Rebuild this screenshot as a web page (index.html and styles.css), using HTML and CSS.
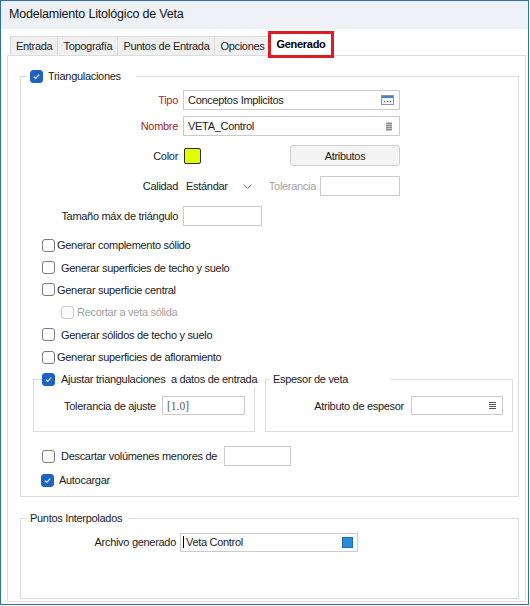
FILE: index.html
```html
<!DOCTYPE html>
<html lang="es">
<head>
  <meta charset="UTF-8">
  <title>Modelamiento Litológico de Veta</title>
  <link rel="stylesheet" href="styles.css">
</head>
<body>
  <div class="window">
    <div class="titlebar">Modelamiento Litológico de Veta</div>

    <div class="tabs">
      <div class="tab">Entrada</div>
      <div class="tab">Topografía</div>
      <div class="tab">Puntos de Entrada</div>
      <div class="tab">Opciones</div>
      <div class="tab active">Generado</div>
    </div>

    <div class="panel">
      <!-- Triangulaciones -->
      <fieldset class="group main-group">
        <legend class="legend-check">
          <span class="box checked"><svg viewBox="0 0 13 13"><path d="M3.3 6.7l2.2 2.1 4.2-4.6"/></svg></span>
          <span>Triangulaciones</span>
        </legend>

        <div class="rows">
          <div class="form-row">
            <span class="label required">Tipo</span>
            <div class="field field-tipo">
              <span>Conceptos Implicitos</span>
              <svg class="icon-browse" viewBox="0 0 13 10">
                <rect x="0.5" y="0.5" width="12" height="9" fill="#f5f7fa" stroke="#8296ad"/>
                <rect x="1" y="1" width="11" height="2" fill="#4a82bf"/>
                <rect x="3" y="6" width="1.2" height="1.2" fill="#555"/>
                <rect x="6" y="6" width="1.2" height="1.2" fill="#555"/>
                <rect x="9" y="6" width="1.2" height="1.2" fill="#555"/>
              </svg>
            </div>
          </div>

          <div class="form-row row-nombre">
            <span class="label required dark">Nombre</span>
            <div class="field field-tipo">
              <span>VETA_Control</span>
              <svg class="icon-list" viewBox="0 0 6 9">
                <rect x="0" y="0" width="6" height="9" fill="#c4c4c4"/>
                <rect x="0" y="1" width="6" height="1" fill="#8c8c8c"/>
                <rect x="0" y="3" width="6" height="1" fill="#8c8c8c"/>
                <rect x="0" y="5" width="6" height="1" fill="#8c8c8c"/>
                <rect x="0" y="7" width="6" height="1" fill="#8c8c8c"/>
              </svg>
            </div>
          </div>

          <div class="form-row row-color">
            <span class="label">Color</span>
            <span class="swatch"></span>
            <button class="btn">Atributos</button>
          </div>

          <div class="form-row row-calidad">
            <span class="label">Calidad</span>
            <div class="select">
              <span>Estándar</span>
              <svg class="chevron" viewBox="0 0 9 5"><path d="M0.5 0.5l4 4 4-4"/></svg>
            </div>
            <span class="label-muted">Tolerancia</span>
            <div class="field field-tol"></div>
          </div>

          <div class="form-row row-tamano">
            <span class="label">Tamaño máx de triángulo</span>
            <div class="field field-tam"></div>
          </div>
        </div>

        <div class="checklist">
          <div class="check-row"><span class="box"></span><span class="text tight">Generar complemento sólido</span></div>
          <div class="check-row"><span class="box"></span><span class="text">Generar superficies de techo y suelo</span></div>
          <div class="check-row"><span class="box"></span><span class="text tight">Generar superficie central</span></div>
          <div class="check-row sub disabled"><span class="box"></span><span class="text mid">Recortar a veta sólida</span></div>
          <div class="check-row"><span class="box"></span><span class="text">Generar sólidos de techo y suelo</span></div>
          <div class="check-row"><span class="box"></span><span class="text tight">Generar superficies de afloramiento</span></div>
        </div>

        <div class="subgroups">
          <fieldset class="group sub-ajuste">
            <legend class="legend-check">
              <span class="box checked"><svg viewBox="0 0 13 13"><path d="M3.3 6.7l2.2 2.1 4.2-4.6"/></svg></span>
              <span>Ajustar triangulaciones&nbsp; a datos de entrada</span>
            </legend>
            <div class="sub-row">
              <span class="label-ajuste">Tolerancia de ajuste</span>
              <div class="field field-ajuste"><span class="serif">[1.0]</span></div>
            </div>
          </fieldset>

          <fieldset class="group sub-espesor">
            <legend class="legend-text">Espesor de veta</legend>
            <div class="sub-row row-end">
              <span>Atributo de espesor</span>
              <div class="field field-espesor">
                <svg class="icon-lines" viewBox="0 0 7 7">
                  <rect x="0" y="0" width="7" height="1" fill="#555"/>
                  <rect x="0" y="2" width="7" height="1" fill="#555"/>
                  <rect x="0" y="4" width="7" height="1" fill="#555"/>
                  <rect x="0" y="6" width="7" height="1" fill="#555"/>
                </svg>
              </div>
            </div>
          </fieldset>
        </div>

        <div class="check-row row-descartar">
          <span class="box"></span>
          <span class="text wide-label">Descartar volúmenes menores de</span>
          <div class="field field-desc"></div>
        </div>

        <div class="check-row row-auto">
          <span class="box checked"><svg viewBox="0 0 13 13"><path d="M3.3 6.7l2.2 2.1 4.2-4.6"/></svg></span>
          <span class="text">Autocargar</span>
        </div>
      </fieldset>

      <!-- Puntos Interpolados -->
      <fieldset class="group puntos-group">
        <legend class="legend-text">Puntos Interpolados</legend>
        <div class="form-row">
          <span class="label label-archivo">Archivo generado</span>
          <div class="field field-archivo">
            <span class="caret"></span><span>Veta Control</span>
            <span class="blue-square"></span>
          </div>
        </div>
      </fieldset>
    </div>
  </div>
</body>
</html>
```

FILE: styles.css
```css
body {
  margin: 0;
  font-family: 'Liberation Sans', Arial, sans-serif;
  font-size: 11px;
  letter-spacing: -0.3px;
  color: #1b1b1b;
  background-color: #ffffff;
}

.window {
  width: 529px;
  height: 605px;
  box-sizing: border-box;
  border: 1px solid #2c70ab;
  background-color: #ffffff;
}

.titlebar {
  height: 28px;
  line-height: 26px;
  padding-left: 8px;
  background-color: #eef2f7;
  font-size: 12.5px;
  letter-spacing: -0.2px;
  color: #111;
}

/* Tabs */
.tabs {
  display: flex;
  align-items: flex-end;
  height: 19px;
  margin-top: 7px;
  padding-left: 9px;
}

.tab {
  height: 19px;
  box-sizing: border-box;
  line-height: 18px;
  padding: 0 5px;
  background-color: #f0f0f0;
  border: 1px solid #dadada;
  border-bottom: none;
  border-left: none;
  color: #222;
}

.tab:first-child {
  border-left: 1px solid #dadada;
}

.tab.active {
  position: relative;
  height: 27px;
  margin-bottom: -3px;
  margin-left: -3px;
  padding: 0 6px;
  line-height: 21px;
  background-color: #ffffff;
  border: 3px solid #e11b22;
  font-weight: bold;
  color: #000;
}

.panel {
  height: 547px;
  box-sizing: border-box;
  margin: 0 2px 0 6px;
  padding: 13px 6px 0 12px;
  border: 1px solid #dcdcdc;
}

/* Group boxes */
.group {
  margin: 0;
  padding: 0;
  min-width: 0;
  border: 1px solid #dcdcdc;
}

.group legend {
  height: 14px;
  line-height: 14px;
  white-space: nowrap;
}

.legend-check {
  display: flex;
  align-items: center;
  gap: 5px;
  margin-left: 6px;
  padding: 0 15px 0 3px;
}

.legend-text {
  margin-left: 6px;
  padding: 0 6px 0 3px;
}

.main-group {
  padding-bottom: 6px;
}

/* Checkboxes */
.box {
  display: inline-block;
  flex: none;
  width: 13px;
  height: 13px;
  box-sizing: border-box;
  border: 1px solid #7c7c7c;
  border-radius: 3px;
  background-color: #ffffff;
}

.box.checked {
  background-color: #1c63c3;
  border-color: #1c63c3;
}

.box svg {
  display: block;
  width: 11px;
  height: 11px;
}

.box svg path {
  fill: none;
  stroke: #ffffff;
  stroke-width: 1.3;
}

/* Upper form */
.rows {
  padding-top: 7px;
}

.form-row {
  display: flex;
  align-items: center;
  height: 20px;
  white-space: nowrap;
}

.label {
  width: 157px;
  margin-right: 5px;
  text-align: right;
  flex: none;
}

.label.required {
  color: #b3252d;
}

.label.dark {
  color: #a31c23;
}

.field {
  display: flex;
  align-items: center;
  height: 20px;
  box-sizing: border-box;
  border: 1px solid #cbcbcb;
  background-color: #ffffff;
  padding: 0 4px;
}

.field-tipo {
  width: 217px;
  justify-content: space-between;
}

.icon-browse {
  width: 13px;
  height: 10px;
  margin-right: 1px;
}

.icon-list {
  width: 6px;
  height: 9px;
  margin-right: 3px;
}

.row-nombre {
  margin-top: 6px;
}

.row-color {
  margin-top: 9px;
  height: 21px;
}

.swatch {
  width: 17px;
  height: 16px;
  box-sizing: border-box;
  margin-left: 1px;
  border: 1px solid #2c2c2c;
  border-radius: 2px;
  background-color: #e2ff00;
}

.btn {
  width: 110px;
  height: 21px;
  margin-left: 89px;
  border: 1px solid #d0d0d0;
  border-radius: 3px;
  background-color: #f4f4f4;
  font-family: inherit;
  font-size: 11px;
  letter-spacing: -0.3px;
  color: #1b1b1b;
}

.row-calidad {
  margin-top: 10px;
}

.select {
  display: flex;
  align-items: center;
  justify-content: space-between;
  width: 74px;
  height: 18px;
  box-sizing: border-box;
  padding: 0 5px 0 3px;
  background-color: #ffffff;
}

.chevron {
  width: 9px;
  height: 5px;
}

.chevron path {
  fill: none;
  stroke: #777;
  stroke-width: 1;
}

.label-muted {
  width: 59px;
  margin-right: 4px;
  text-align: right;
  color: #a5a5a5;
}

.field-tol {
  width: 80px;
}

.row-tamano {
  margin-top: 10px;
}

.field-tam {
  width: 79px;
}

/* Checkbox list */
.checklist {
  margin-top: 8px;
  padding-left: 21px;
}

.check-row {
  display: flex;
  align-items: center;
  height: 22.4px;
  white-space: nowrap;
}

.check-row .text {
  margin-left: 6px;
}

.check-row .text.tight {
  margin-left: 2px;
}

.check-row .text.mid {
  margin-left: 3px;
}

.check-row.sub {
  padding-left: 19px;
}

.check-row.disabled .box {
  border-color: #c9c9c9;
  background-color: #fafafa;
}

.check-row.disabled .text {
  color: #a2a2a2;
}

/* Sub group boxes */
.subgroups {
  display: flex;
  gap: 10px;
  margin-top: 4px;
  padding-left: 12px;
}

.sub-ajuste {
  width: 220px;
  padding: 10px 0 16px;
}

.sub-ajuste .legend-check {
  margin-left: 8px;
  padding: 0;
  gap: 6px;
}

.sub-espesor {
  width: 246px;
  padding: 10px 0 16px;
}

.sub-espesor .legend-text {
  margin-left: 3px;
  padding: 0 42px 0 4px;
}

.sub-row {
  display: flex;
  align-items: center;
  gap: 7px;
  padding-left: 30px;
  white-space: nowrap;
}

.label-ajuste {
  width: 91px;
  flex: none;
}

.sub-row.row-end {
  justify-content: flex-end;
  padding-left: 0;
  padding-right: 9px;
}

.field-ajuste {
  width: 83px;
  height: 19px;
}

.serif {
  font-family: 'Liberation Serif', 'Times New Roman', serif;
  font-size: 11.5px;
  letter-spacing: 0;
  color: #5a5a5a;
}

.field-espesor {
  width: 92px;
  height: 19px;
  justify-content: flex-end;
  padding-right: 6px;
}

.icon-lines {
  width: 7px;
  height: 7px;
}

.row-descartar {
  height: 20px;
  margin-top: 14px;
  padding-left: 21px;
}

.wide-label {
  width: 163px;
  flex: none;
}

.field-desc {
  width: 67px;
}

.row-auto {
  height: 20px;
  margin-top: 4px;
  padding-left: 20px;
}

.row-auto .text {
  margin-left: 5px;
}

/* Puntos Interpolados */
.puntos-group {
  margin-top: 14px;
  padding: 7px 0 46px;
}

.puntos-group .legend-text {
  margin-left: 6px;
  padding: 0 6px 0 3px;
}

.label-archivo {
  width: 155px;
  margin-right: 4px;
}

.field-archivo {
  width: 178px;
  height: 19px;
  padding-left: 2px;
  padding-right: 4px;
}

.caret {
  width: 1px;
  height: 12px;
  margin-right: 2px;
  background-color: #000;
}

.blue-square {
  width: 11px;
  height: 11px;
  box-sizing: border-box;
  margin-left: auto;
  border: 1px solid #1b6bb3;
  background-color: #2b8ad6;
}
```
